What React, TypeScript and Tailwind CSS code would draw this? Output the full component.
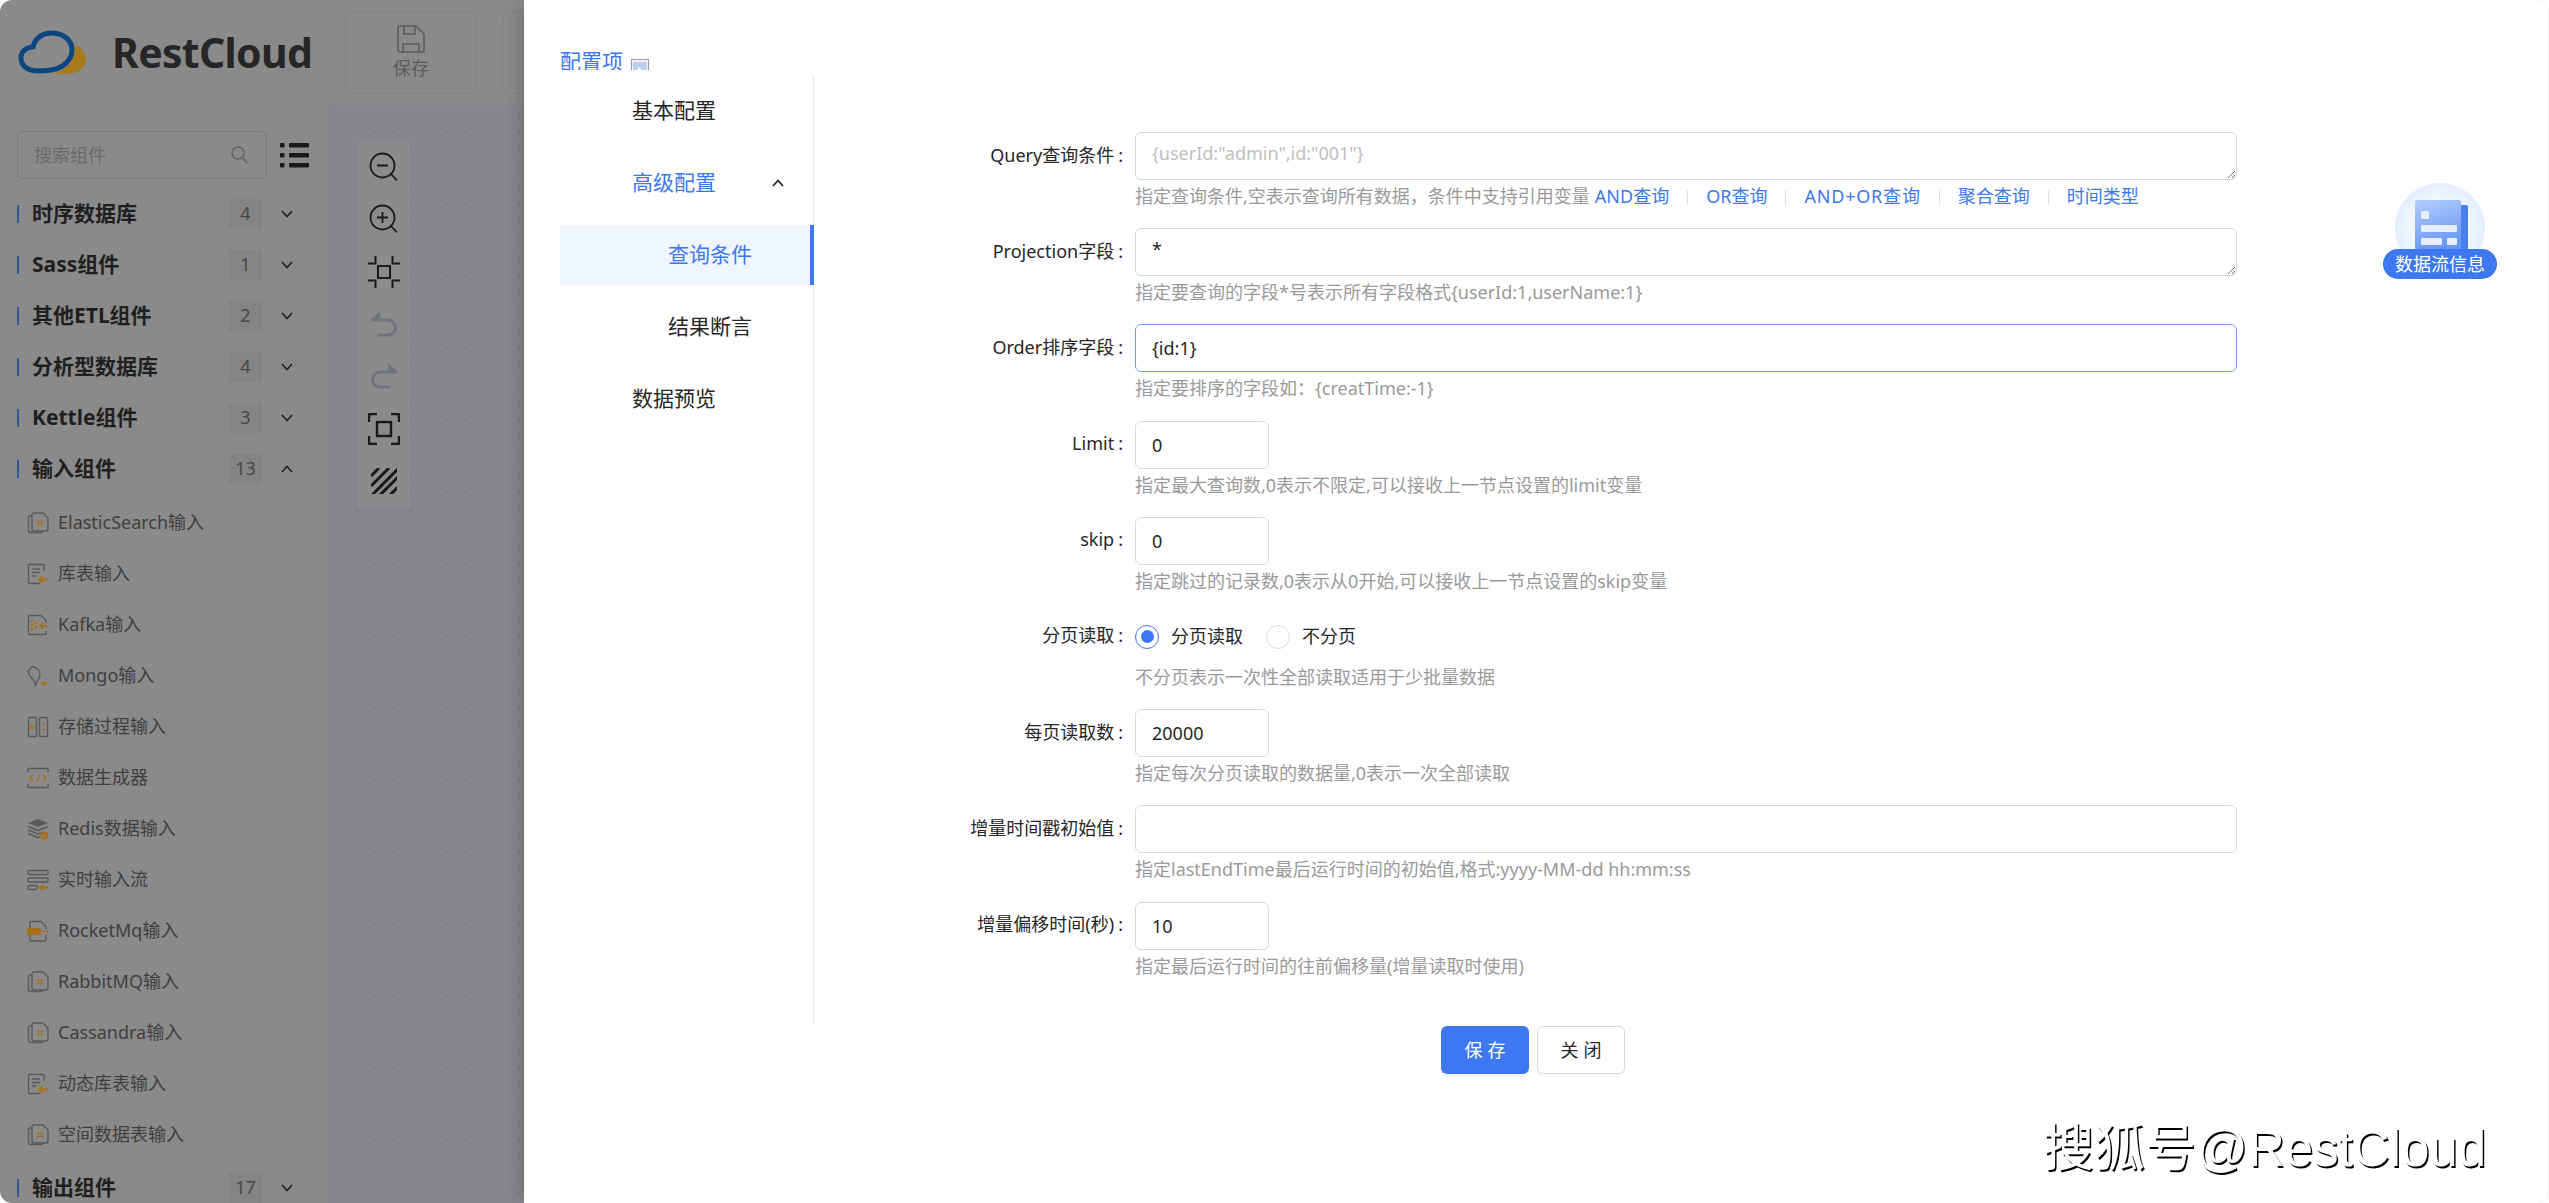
const gray = "#5a5a5a";
const orange = "#a9701c";

function Chevron({ up = false, color = "#1f1f1f" }: { up?: boolean; color?: string }) {
  return (
    <svg width="12" height="8" viewBox="0 0 12 8" fill="none" stroke={color} strokeWidth="1.6">
      <path d={up ? "M1 7l5-5.5L11 7" : "M1 1l5 5.5L11 1"} />
    </svg>
  );
}

function ItemIcon({ name }: { name: string }) {
  const g = { stroke: gray, strokeWidth: 1.4, fill: "none" };
  const o = { stroke: orange, strokeWidth: 1.5, fill: "none" };
  return (
    <svg width="22" height="22" viewBox="0 0 22 22" className="shrink-0">
      {name === "doc" && (
        <>
          <path {...g} d="M5 4H3.500a2 2 0 0 0-2 2v12.500a2 2 0 0 0 2 2H14a2 2 0 0 0 2-1.500" />
          <path {...g} d="M7 1h9l5 5v11a2 2 0 0 1-2 2H7a2 2 0 0 1-2-2V3a2 2 0 0 1 2-2z" />
          <path {...o} d="M10 9.500h6M10 12.500h6" />
        </>
      )}
      {name === "table" && (
        <>
          <path {...g} d="M17 8V2.500a1 1 0 0 0-1-1H2.500a1 1 0 0 0-1 1v17a1 1 0 0 0 1 1H13" />
          <path {...g} d="M5 6h8M5 9.500h8M5 13h4" />
          <path {...o} strokeWidth={1.8} d="M21.500 16.500H12M15.500 13l-3.500 3.500 3.500 3.500" />
        </>
      )}
      {name === "kafka" && (
        <>
          <path {...g} d="M14 1.500H2.500a1 1 0 0 0-1 1v17a1 1 0 0 0 1 1H18a1 1 0 0 0 1-1V17M14 1.500l5 5V9" />
          <circle cx="5" cy="7" r="1.500" fill={orange} />
          <circle cx="5" cy="11" r="1.500" fill={orange} />
          <circle cx="5" cy="15" r="1.500" fill={orange} />
          <circle cx="9" cy="9" r="1.500" fill={orange} />
          <circle cx="9" cy="13" r="1.500" fill={orange} />
          <path {...o} d="M21 12h-8M16 9l-3 3 3 3" />
        </>
      )}
      {name === "mongo" && (
        <>
          <path {...g} d="M6 1.500C2 3 .5 7 2.500 10.500c1.500 2.500 4 3.500 5 6.500l1 3.500 1-3c1-2.500 3-4 3.500-7C13 6 10 2.500 6 1.500z" />
          <path {...o} d="M21 18.500h-6M17.500 16.500l-2.500 2 2.500 2" />
        </>
      )}
      {name === "proc" && (
        <>
          <rect {...g} x="1.500" y="1.500" width="8" height="19" rx="1" />
          <rect {...g} x="12.500" y="1.500" width="8" height="19" rx="1" />
          <path {...o} d="M8.500 11H3M5.500 8.500 3 11l2.500 2.500M15 8.500h3M15 13.500h3" />
        </>
      )}
      {name === "code" && (
        <>
          <path {...g} strokeWidth={1.6} d="M1 5V2.500a1 1 0 0 1 1-1h18a1 1 0 0 1 1 1V5M1 17v2.500a1 1 0 0 0 1 1h18a1 1 0 0 0 1-1V17" />
          <path {...o} d="M6 8l-3 3 3 3M16 8l3 3-3 3M12.500 7.500 10 14.500" />
        </>
      )}
      {name === "redis" && (
        <>
          <path fill={gray} d="M11 1 1 5l10 4 10-4z" />
          <path {...g} strokeWidth={1.8} d="M1 8.500l10 4 10-4M1 12l10 4 3-1.200M1 15.500l10 4 2-.800" />
          <circle cx="17.500" cy="17.500" r="4" fill={orange} />
          <path stroke="#8a8a8a" strokeWidth="1" fill="none" d="M20 17.500h-5M16.500 16l-1.500 1.500 1.500 1.500" />
        </>
      )}
      {name === "stream" && (
        <>
          <rect {...g} x="1" y="1.500" width="20" height="4" rx="1" />
          <rect {...g} x="1" y="9" width="20" height="4" rx="1" />
          <rect {...g} x="1" y="16.500" width="9" height="4" rx="1" />
          <path {...o} strokeWidth={1.8} d="M21 18.500h-8M16 16l-3 2.500 3 2.500" />
        </>
      )}
      {name === "rocket" && (
        <>
          <path {...g} d="M3 8V3a1.500 1.500 0 0 1 1.500-1.500H14l5 5V9M3 15v4.500A1.500 1.500 0 0 0 4.500 21H17.500a1.500 1.500 0 0 0 1.500-1.500V15" />
          <rect x="0" y="8" width="14" height="7" rx="1" fill={orange} />
          <path {...o} strokeWidth={1} d="M15 11.500h6M19.500 10l1.500 1.500-1.500 1.500" />
        </>
      )}
    </svg>
  );
}

function SectionRow({ title, count, open = false }: { title: string; count: number; open?: boolean }) {
  return (
    <div className="flex h-[51px] items-center pl-[17px]">
      <div className="h-[18px] w-[2px] bg-[#2f5699]"></div>
      <div className="ml-[13px] w-[197px] text-[21px] font-bold text-[#1f1f1f]">{title}</div>
      <div className="flex h-[30px] w-[33px] items-center justify-center bg-[#848484] text-[18px] text-[#474747]">{count}</div>
      <div className="ml-[19px] flex w-[12px] justify-center">
        <Chevron up={open} />
      </div>
    </div>
  );
}

function ItemRow({ icon, label }: { icon: string; label: string }) {
  return (
    <div className="flex h-[51px] items-center gap-[9px] pl-[27px] text-[18px] text-[#3f3f3f]">
      <ItemIcon name={icon} />
      <span>{label}</span>
    </div>
  );
}

function ToolIcon({ children }: { children: React.ReactNode }) {
  return <div className="flex h-[52.300px] items-center justify-center">{children}</div>;
}

function Toolbar() {
  const dark = { stroke: "#17191c", fill: "none" };
  return (
    <div className="w-[53px] bg-[#8b8b8b]">
      <ToolIcon>
        <svg width="30" height="30" viewBox="0 0 30 30" strokeWidth="1.800" {...dark}>
          <circle cx="13.500" cy="13.500" r="12" />
          <path d="M8 13.500h11M22 22l6 6.500" />
        </svg>
      </ToolIcon>
      <ToolIcon>
        <svg width="30" height="30" viewBox="0 0 30 30" strokeWidth="1.800" {...dark}>
          <circle cx="13.500" cy="13.500" r="12" />
          <path d="M8 13.500h11M13.500 8v11M22 22l6 6.500" />
        </svg>
      </ToolIcon>
      <ToolIcon>
        <svg width="32" height="32" viewBox="0 0 32 32" strokeWidth="2" {...dark}>
          <rect x="10" y="10" width="12" height="12" />
          <path d="M0 7.500h7.500V0M24.500 0v7.500H32M0 24.500h7.500V32M32 24.500h-7.500V32" />
        </svg>
      </ToolIcon>
      <ToolIcon>
        <svg width="30" height="30" viewBox="0 0 30 30" fill="none">
          <path d="M4 11h15a7.500 7.500 0 0 1 0 15H10" stroke="#6f747d" strokeWidth="3" strokeLinecap="round" />
          <path d="M11 2 1 11h10z" fill="#6f747d" />
        </svg>
      </ToolIcon>
      <ToolIcon>
        <svg width="30" height="30" viewBox="0 0 30 30" fill="none">
          <path d="M26 11H11a7.500 7.500 0 0 0 0 15h9" stroke="#6f747d" strokeWidth="3" strokeLinecap="round" />
          <path d="M19 2l10 9H19z" fill="#6f747d" />
        </svg>
      </ToolIcon>
      <ToolIcon>
        <svg width="32" height="32" viewBox="0 0 32 32" strokeWidth="2.400" {...dark}>
          <rect x="9" y="9" width="14" height="14" />
          <path d="M1 9V2a1 1 0 0 1 1-1h7M23 1h7a1 1 0 0 1 1 1v7M1 23v7a1 1 0 0 0 1 1h7M23 31h7a1 1 0 0 0 1-1v-7" />
        </svg>
      </ToolIcon>
      <ToolIcon>
        <svg width="26" height="26" viewBox="0 0 26 26" stroke="#17191c" strokeWidth="3">
          <path d="M0 8 8 0M0 18 18 0M0 28 28 0M8 28 28 8M18 28 28 18" />
        </svg>
      </ToolIcon>
    </div>
  );
}

function LeftPage() {
  return (
    <div className="flex h-full w-[524px] shrink-0 flex-col overflow-hidden rounded-l-[12px] bg-[#8a8a8a]">
      <div className="flex h-[105px] shrink-0 items-center">
        <svg width="70" height="46" viewBox="0 0 70 46" className="ml-[18px] shrink-0" fill="none">
          <path d="M57 15c7 3 11 8 11 14 0 9-9 15-19 15H36c11-3 22-13 21-29z" fill="#a87a1c" />
          <path d="M20 41C10 41 3 36 3 28c0-8 7-11 12-11C17 8 25 3 33 3c11 0 21 6 21 17 0 10-9 17-16 19-8 2-12 2-18 2z" stroke="#0c4680" strokeWidth="5" />
        </svg>
        <div className="ml-[24px] w-[203px] shrink-0 text-[41px] leading-none font-bold tracking-[-0.7px] text-[#262626]">RestCloud</div>
        <div className="ml-[30px] flex h-[82px] w-[132px] shrink-0 flex-col items-center rounded-[8px] border border-[#7f8184] pt-[12px]">
          <svg width="28" height="28" viewBox="0 0 28 28" fill="none" stroke="#5c5c5c" strokeWidth="1.600">
            <path d="M1 3a2 2 0 0 1 2-2h16l8 8v16a2 2 0 0 1-2 2H3a2 2 0 0 1-2-2z" />
            <path d="M7 1v8h11V1M6 27v-8h16v8" />
          </svg>
          <span className="mt-[3px] text-[18px] leading-[24px] text-[#5c5c5c]">保存</span>
        </div>
        <div className="ml-[25px] h-[82px] w-[132px] shrink-0 rounded-[8px] border border-[#7f8184]"></div>
      </div>
      <div className="flex min-h-0 flex-1">
        <div className="w-[330px] shrink-0 overflow-hidden border-r border-[#7b7c80] pt-[26px]">
          <div className="flex items-center">
            <div className="ml-[17px] flex h-[48px] w-[250px] items-center justify-between rounded-[6px] border border-[#797a7c] pr-[18px] pl-[16px] text-[18px] text-[#6a6a6a]">
              <span>搜索组件</span>
              <svg width="17" height="18" viewBox="0 0 17 18" fill="none" stroke="#626262" strokeWidth="1.400">
                <circle cx="7" cy="7" r="6" />
                <path d="M11.500 11.500 16 17" />
              </svg>
            </div>
            <svg width="29" height="25" viewBox="0 0 29 25" className="ml-[13px]" fill="#17191c">
              <rect x="0" y="0" width="4.500" height="4.500" rx="1" />
              <rect x="0" y="10" width="4.500" height="4.500" rx="1" />
              <rect x="0" y="20" width="4.500" height="4.500" rx="1" />
              <rect x="9" y="0" width="20" height="4.500" rx="1" />
              <rect x="9" y="10" width="20" height="4.500" rx="1" />
              <rect x="9" y="20" width="20" height="4.500" rx="1" />
            </svg>
          </div>
          <div className="mt-[9px]">
            <SectionRow title="时序数据库" count={4} />
            <SectionRow title="Sass组件" count={1} />
            <SectionRow title="其他ETL组件" count={2} />
            <SectionRow title="分析型数据库" count={4} />
            <SectionRow title="Kettle组件" count={3} />
            <SectionRow title="输入组件" count={13} open />
            <div className="pt-[3px] pb-[2px]">
              <ItemRow icon="doc" label="ElasticSearch输入" />
              <ItemRow icon="table" label="库表输入" />
              <ItemRow icon="kafka" label="Kafka输入" />
              <ItemRow icon="mongo" label="Mongo输入" />
              <ItemRow icon="proc" label="存储过程输入" />
              <ItemRow icon="code" label="数据生成器" />
              <ItemRow icon="redis" label="Redis数据输入" />
              <ItemRow icon="stream" label="实时输入流" />
              <ItemRow icon="rocket" label="RocketMq输入" />
              <ItemRow icon="doc" label="RabbitMQ输入" />
              <ItemRow icon="doc" label="Cassandra输入" />
              <ItemRow icon="table" label="动态库表输入" />
              <ItemRow icon="doc" label="空间数据表输入" />
            </div>
            <SectionRow title="输出组件" count={17} />
          </div>
        </div>
        <div className="min-w-0 flex-1 bg-[#85868b] bg-[radial-gradient(circle,#7b7c81_1.200px,transparent_1.600px)] bg-[size:18px_18px] pt-[36px] pl-[27px]">
          <Toolbar />
        </div>
      </div>
    </div>
  );
}

function Help({ children }: { children: React.ReactNode }) {
  return <div className="text-[18px] leading-[32px] whitespace-nowrap text-[#9a9a9a]">{children}</div>;
}

function Field({ label, help, children }: { label: string; help: React.ReactNode; children: React.ReactNode }) {
  return (
    <div className="flex h-[96.200px]">
      <div className="flex h-[46px] w-[309px] items-center justify-end text-[18px] text-[#262626]">
        {label}
        <span className="ml-[4px]">:</span>
      </div>
      <div className="ml-[12px]">
        {children}
        <Help>{help}</Help>
      </div>
    </div>
  );
}

const boxBase = "block h-[48px] rounded-[6px] border bg-white px-[16px] text-[18px] text-[#262626] outline-none placeholder:text-[#bfbfbf]";

function Area({ value, placeholder }: { value?: string; placeholder?: string }) {
  return <textarea readOnly value={value} placeholder={placeholder} className={boxBase + " w-[1102px] border-[#d9d9d9] py-[7px] leading-[27px]"} />;
}

function Short({ value }: { value: string }) {
  return <input readOnly value={value} className={boxBase + " w-[134px] border-[#d9d9d9]"} />;
}

function LinkSep() {
  return <span className="mx-[18px] inline-block h-[15px] w-px bg-[#e0e0e0] align-[-2px]"></span>;
}

function MenuItem({ children, sub = false, active = false, blue = false, chevron = false }: { children: React.ReactNode; sub?: boolean; active?: boolean; blue?: boolean; chevron?: boolean }) {
  return (
    <div
      className={
        "mb-[12px] flex h-[60px] items-center justify-between text-[21px] " +
        (sub ? "pl-[108px] " : "pl-[72px] ") +
        (active ? "-mr-px border-r-[4px] border-[#3d78f0] bg-[#f0f6ff] " : "") +
        (chevron ? "pr-[29px] " : "") +
        (blue || active ? "text-[#3d78f0]" : "text-[#262626]")
      }
    >
      <span>{children}</span>
      {chevron && <Chevron up />}
    </div>
  );
}

function Radio({ checked, label }: { checked?: boolean; label: string }) {
  return (
    <div className="flex items-center gap-[12px]">
      <span className={"flex h-[24px] w-[24px] items-center justify-center rounded-full border " + (checked ? "border-[#3d78f0]" : "border-[#d9d9d9]")}>
        {checked && <span className="h-[13px] w-[13px] rounded-full bg-[#3d78f0]"></span>}
      </span>
      <span className="text-[18px] text-[#262626]">{label}</span>
    </div>
  );
}

function Modal() {
  return (
    <div className="relative z-10 flex h-full min-w-0 flex-1 flex-col rounded-r-[12px] border-r border-[#f0f0f0] bg-white shadow-[-6px_0_16px_-4px_rgba(0,0,0,0.22)]">
      <div className="flex h-[70px] shrink-0 items-start overflow-hidden pt-[46px] pl-[36px]">
        <span className="text-[21px] leading-[30px] text-[#3d78f0]">配置项</span>
        <svg width="18" height="18" viewBox="0 0 18 18" className="mt-[13px] ml-[8px]">
          <rect x="0.500" y="0.500" width="17" height="17" fill="#f2f2f2" stroke="#989898" />
          <rect x="2" y="3" width="14" height="14" fill="#b9d0f0" />
          <path d="M4 14l4-6 5 6z" fill="#f5f8fd" />
        </svg>
      </div>
      <div className="mt-[5px] flex h-[951px] shrink-0">
        <div className="ml-[36px] h-full w-[254px] shrink-0 border-r border-[#e8e8e8] pt-[6px]">
          <MenuItem>基本配置</MenuItem>
          <MenuItem blue chevron>高级配置</MenuItem>
          <MenuItem sub active>查询条件</MenuItem>
          <MenuItem sub>结果断言</MenuItem>
          <MenuItem>数据预览</MenuItem>
        </div>
        <div className="pt-[57px]">
          <Field
            label="Query查询条件"
            help={
              <>
                指定查询条件,空表示查询所有数据，条件中支持引用变量
                <span className="ml-[5px] text-[#3d78f0]">AND查询</span>
                <LinkSep />
                <span className="text-[#3d78f0]">OR查询</span>
                <LinkSep />
                <span className="tracking-[0.8px] text-[#3d78f0]">AND+OR查询</span>
                <LinkSep />
                <span className="text-[#3d78f0]">聚合查询</span>
                <LinkSep />
                <span className="text-[#3d78f0]">时间类型</span>
              </>
            }
          >
            <Area placeholder={'{userId:"admin",id:"001"}'} />
          </Field>
          <Field label="Projection字段" help="指定要查询的字段*号表示所有字段格式{userId:1,userName:1}">
            <Area value="*" />
          </Field>
          <Field label="Order排序字段" help="指定要排序的字段如：{creatTime:-1}">
            <input readOnly value="{id:1}" className={boxBase + " w-[1102px] border-[#6f9ef8]"} />
          </Field>
          <Field label="Limit" help="指定最大查询数,0表示不限定,可以接收上一节点设置的limit变量">
            <Short value="0" />
          </Field>
          <Field label="skip" help="指定跳过的记录数,0表示从0开始,可以接收上一节点设置的skip变量">
            <Short value="0" />
          </Field>
          <Field label="分页读取" help="不分页表示一次性全部读取适用于少批量数据">
            <div className="flex h-[48px] items-center gap-[23px]">
              <Radio checked label="分页读取" />
              <Radio label="不分页" />
            </div>
          </Field>
          <Field label="每页读取数" help="指定每次分页读取的数据量,0表示一次全部读取">
            <Short value="20000" />
          </Field>
          <Field label="增量时间戳初始值" help="指定lastEndTime最后运行时间的初始值,格式:yyyy-MM-dd hh:mm:ss">
            <input readOnly value="" className={boxBase + " w-[1102px] border-[#d9d9d9]"} />
          </Field>
          <Field label="增量偏移时间(秒)" help="指定最后运行时间的往前偏移量(增量读取时使用)">
            <Short value="10" />
          </Field>
        </div>
      </div>
      <div className="flex justify-center gap-[8px] pr-[6px]">
        <button className="h-[48px] w-[88px] rounded-[6px] bg-[#3d78f0] pl-[5px] text-[18px] tracking-[5px] text-white shadow-[0_3px_0_rgba(0,0,0,0.04)]">保存</button>
        <button className="h-[48px] w-[88px] rounded-[6px] border border-[#d9d9d9] bg-white pl-[5px] text-[18px] tracking-[5px] text-[#262626] shadow-[0_3px_0_rgba(0,0,0,0.02)]">关闭</button>
      </div>

      <div className="absolute top-[183px] left-[1859px] flex w-[114px] flex-col items-center">
        <div className="flex h-[90px] w-[90px] items-start justify-center rounded-full bg-[radial-gradient(circle,#ffffff_20%,#d3e5ff_100%)] pt-[17px] pl-[3px]">
          <svg width="54" height="50" viewBox="0 0 54 50">
            <defs>
              <linearGradient id="docFill" x1="0" y1="0" x2="0.300" y2="1">
                <stop offset="0" stopColor="#b4cefc" />
                <stop offset="1" stopColor="#6a98f4" />
              </linearGradient>
            </defs>
            <rect x="45" y="5" width="8" height="45" rx="2" fill="#4a80f0" />
            <rect x="0" y="0" width="46" height="50" rx="2" fill="url(#docFill)" />
            <rect x="6" y="11" width="8" height="8" rx="1" fill="#e6eeff" />
            <rect x="6" y="25" width="36" height="7" rx="1" fill="#e6eeff" />
            <rect x="6" y="38" width="21" height="7" rx="1" fill="#e6eeff" />
            <rect x="32" y="38" width="10" height="7" rx="1" fill="#e6eeff" />
          </svg>
        </div>
        <div className="-mt-[24px] flex h-[30px] w-[114px] items-center justify-center rounded-full bg-[#3d78f0] text-[18px] text-white">数据流信息</div>
      </div>

      <div className="absolute right-[62px] bottom-[24px] [font-family:'Liberation_Sans','Noto_Sans_CJK_SC',sans-serif] text-[51px] leading-[60px] whitespace-nowrap text-white [text-shadow:1.5px_1.5px_0_#000]">
        搜狐号@RestCloud
      </div>
    </div>
  );
}

export default function App() {
  return (
    <div className="flex h-[1203px] w-full overflow-hidden bg-white [font-family:'Noto_Sans','Noto_Sans_CJK_SC',sans-serif]">
      <LeftPage />
      <Modal />
    </div>
  );
}
